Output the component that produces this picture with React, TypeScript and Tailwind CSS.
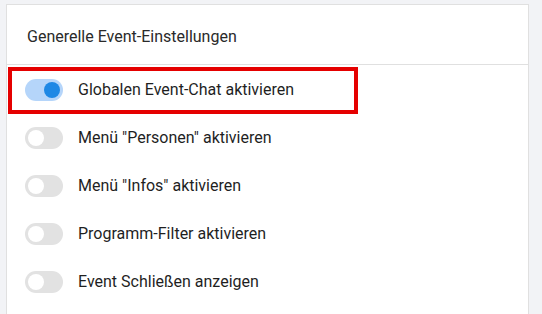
import React from "react";

const rows = [
  { label: "Globalen Event-Chat aktivieren", on: true },
  { label: 'Menü "Personen" aktivieren', on: false },
  { label: 'Menü "Infos" aktivieren', on: false },
  { label: "Programm-Filter aktivieren", on: false },
  { label: "Event Schließen anzeigen", on: false },
];

function Toggle({ on }: { on: boolean }) {
  return (
    <div
      className={
        "relative w-[38px] h-[22px] rounded-full shrink-0 " +
        (on ? "bg-[#b5d5fa]" : "bg-[#e2e2e2]")
      }
    >
      <div
        className={
          "absolute top-[3px] w-[16px] h-[16px] rounded-full " +
          (on ? "left-[19px] bg-[#1e88e5]" : "left-[3px] bg-white")
        }
      />
    </div>
  );
}

export default function App() {
  return (
    <div
      className="w-[542px] h-[314px] overflow-hidden bg-[#f2f3f6] pt-[4px] pl-[6px]"
      style={{ fontFamily: "Roboto, 'Noto Sans', sans-serif" }}
    >
      <div className="w-[523px] h-[320px] bg-white border border-[#e0e0e0]">
        <div className="h-[60px] flex items-center pl-[20px] pt-[4px] border-b border-[#e0e0e0] text-[16px] text-[#2a2a2a]">
          Generelle Event-Einstellungen
        </div>
        <div className="pt-[1px]">
          {rows.map((r, i) => (
            <div key={i} className="relative flex items-center pl-[18px] gap-[15px] h-[48px]">
              {i === 0 && (
                <div className="absolute left-[1px] top-[1px] w-[350px] h-[47px] border-4 border-[#e50000]" />
              )}
              <Toggle on={r.on} />
              <span className="text-[16px] text-[#1f1f1f]">{r.label}</span>
            </div>
          ))}
        </div>
      </div>
    </div>
  );
}
